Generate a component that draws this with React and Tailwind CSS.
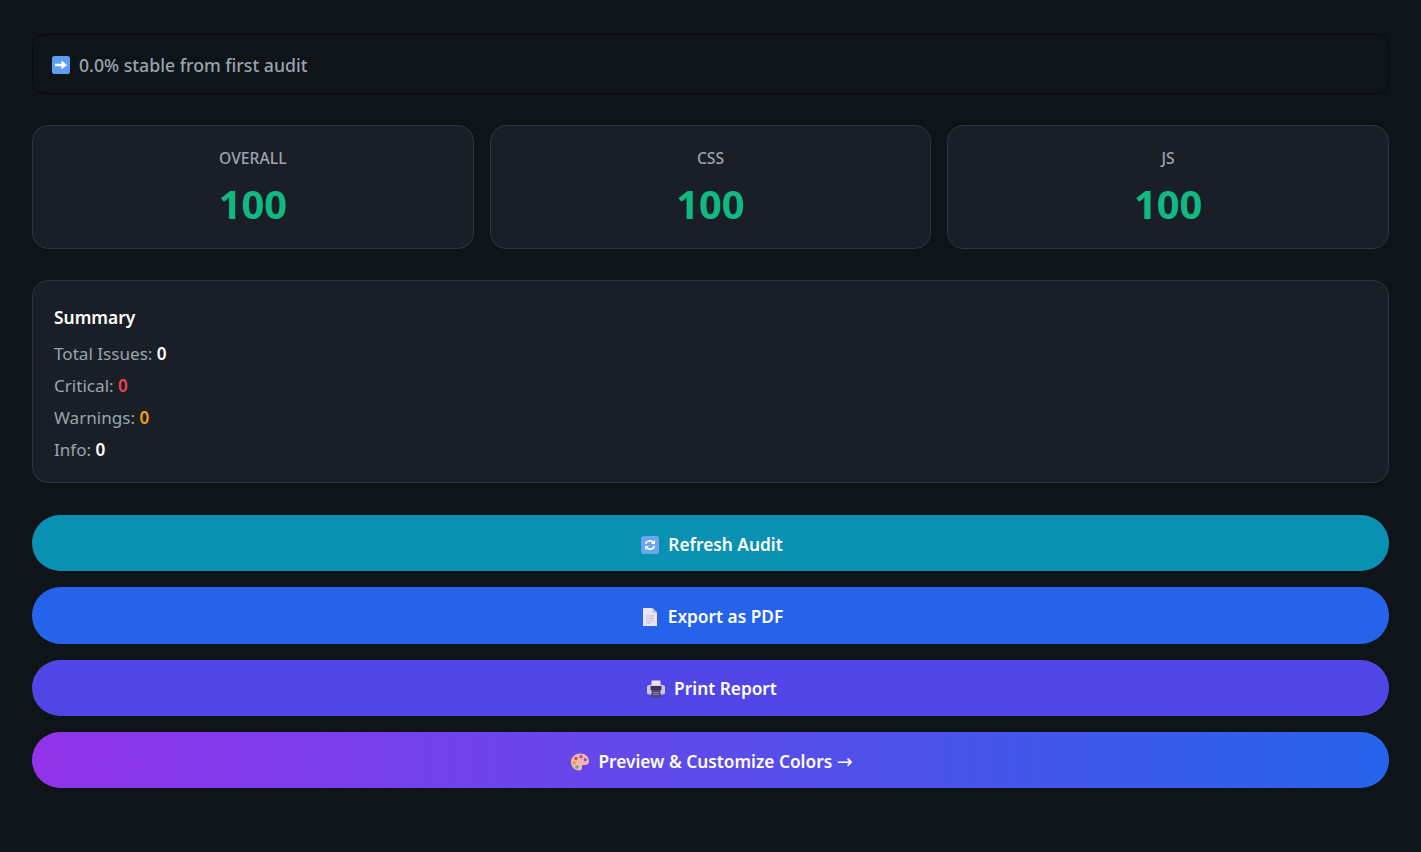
const RefreshEmoji = () => (
    <svg width="20" height="20" viewBox="0 0 20 20" className="shrink-0">
        <rect x="1" y="1" width="18" height="18" rx="2.5" fill="#6ba6f2" />
        <path d="M5.500 9a4.500 4 0 0 1 7.700-1.800" fill="none" stroke="#fff" strokeWidth="1.700" />
        <path d="M15 5v4h-4z" fill="#fff" />
        <path d="M14.500 11a4.500 4 0 0 1-7.700 1.800" fill="none" stroke="#fff" strokeWidth="1.700" />
        <path d="M5 15v-4h4z" fill="#fff" />
    </svg>
);

const ArrowEmoji = () => (
    <svg width="20" height="20" viewBox="0 0 20 20" className="shrink-0">
        <rect x="1" y="1" width="18" height="18" rx="2.5" fill="#5a9ff0" />
        <path d="M4 8.700h6.500V5.500L16 10l-5.500 4.500v-3.200H4z" fill="#fff" />
    </svg>
);

const PageEmoji = () => (
    <svg width="20" height="20" viewBox="0 0 20 20" className="shrink-0">
        <path d="M3 1h9.500l4.500 4.500V19H3z" fill="#ece3f3" />
        <path d="M12.500 1v4.500H17z" fill="#c7bbd6" />
        <path d="M6 9h8M6 11.500h8M6 14h8M6 16.200h5" stroke="#c4b8d2" strokeWidth="1" />
    </svg>
);

const PrinterEmoji = () => (
    <svg width="20" height="20" viewBox="0 0 20 20" className="shrink-0">
        <path d="M5.500 1.500h9V7h-9z" fill="#e9e4f2" />
        <rect x="1" y="6" width="18" height="9.500" rx="2" fill="#cfc8de" />
        <rect x="4.500" y="7" width="11" height="4" fill="#3d3560" />
        <rect x="5.500" y="11" width="9" height="7.500" fill="#4b4370" />
        <path d="M7 13.500h6M7 15.500h6" stroke="#8f88b0" strokeWidth="1" />
    </svg>
);

const PaletteEmoji = () => (
    <svg width="20" height="20" viewBox="0 0 20 20" className="shrink-0">
        <path d="M10 1.500c5.200 0 9 3.400 9 7.500 0 3-2.200 4.300-4.500 4-1.800-.2-3 .5-2.600 2.200.4 1.800-.7 3.300-2.900 3.300C4.600 18.500 1 14.600 1 10c0-4.800 4-8.500 9-8.500z" fill="#f5b7a6" />
        <circle cx="6" cy="6.500" r="1.700" fill="#d9466a" />
        <circle cx="11" cy="4.800" r="1.700" fill="#b04bb0" />
        <circle cx="15.300" cy="7.700" r="1.700" fill="#8a5ac8" />
        <circle cx="4.300" cy="11" r="1.700" fill="#e2a13c" />
        <circle cx="7" cy="15" r="1.700" fill="#58a6a0" />
    </svg>
);

const ScoreCard = ({ label, score }) => (
    <div className="flex h-[124px] flex-col items-center rounded-2xl border border-[#2d333f] bg-[#1a1f27] pt-[20px]">
        <div className="text-[15.7px] leading-[24px] font-medium text-[#9ca3af]">{label}</div>
        <div className="mt-[10px] text-[39.8px] leading-[48px] font-bold text-[#10b981]">{score}</div>
    </div>
);

const ActionButton = ({ icon, children, className }) => (
    <button className={`flex h-[56.3px] w-full items-center justify-center gap-[8px] rounded-full pt-[3px] pl-[2px] text-[17.3px] font-semibold text-white ${className}`}>
        {icon}
        <span>{children}</span>
    </button>
);

const App = () => {
    return (
        <div className="h-[852px] overflow-hidden bg-[#0f1419] px-8 pt-[34px] font-['Noto_Sans',sans-serif]">
            <div className="flex h-[60px] items-center gap-[8px] rounded-xl border border-[#07090c] px-[18px] pt-[2px] text-[17.7px] font-medium text-[#9ca3af]">
                <ArrowEmoji />
                <span>0.0% stable from first audit</span>
            </div>

            <div className="mt-[31px] grid grid-cols-3 gap-4">
                <ScoreCard label="OVERALL" score="100" />
                <ScoreCard label="CSS" score="100" />
                <ScoreCard label="JS" score="100" />
            </div>

            <div className="mt-[31px] h-[203px] rounded-2xl border border-[#2d333f] bg-[#1a1f27] px-[21px] pt-[21px]">
                <h3 className="text-[17.4px] leading-[30px] font-semibold text-white">Summary</h3>
                <div className="mt-[6px] text-[17.1px] leading-[32px] text-[#9ca3af]">
                    <p>Total Issues: <strong className="font-semibold text-white">0</strong></p>
                    <p>Critical: <strong className="font-semibold text-[#ef4444]">0</strong></p>
                    <p>Warnings: <strong className="font-semibold text-[#f59e0b]">0</strong></p>
                    <p>Info: <strong className="font-semibold text-white">0</strong></p>
                </div>
            </div>

            <div className="mt-[32px] flex flex-col gap-4">
                <ActionButton icon={<RefreshEmoji />} className="bg-[#0891b2]">Refresh Audit</ActionButton>
                <ActionButton icon={<PageEmoji />} className="bg-[#2563eb]">Export as PDF</ActionButton>
                <ActionButton icon={<PrinterEmoji />} className="bg-[#4f46e5]">Print Report</ActionButton>
                <ActionButton icon={<PaletteEmoji />} className="bg-linear-to-r/srgb from-[#9333ea] to-[#2563eb]">
                    Preview &amp; Customize Colors <span className="font-['DejaVu_Sans',sans-serif] text-[19px] font-normal">→</span>
                </ActionButton>
            </div>
        </div>
    );
};

export default App;
